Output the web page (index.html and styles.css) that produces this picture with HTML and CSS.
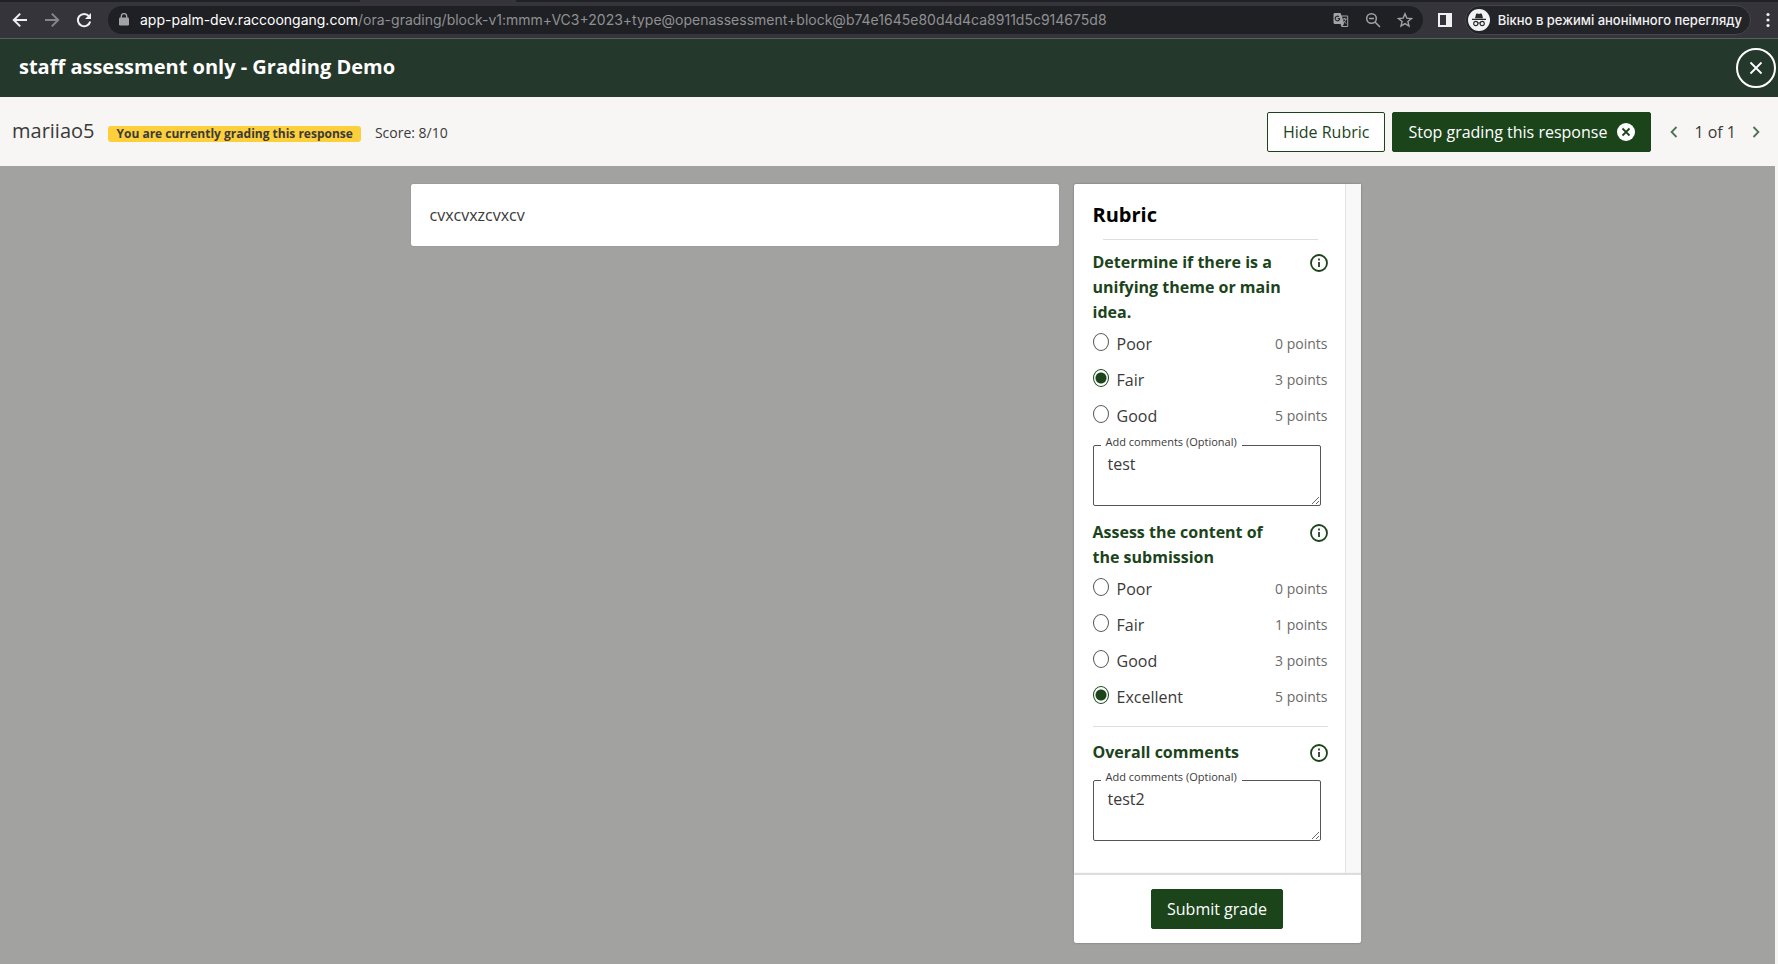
FILE: index.html
```html
<!DOCTYPE html>
<html lang="en">
<head>
<meta charset="utf-8">
<meta name="viewport" content="width=device-width, initial-scale=1">
<title>staff assessment only - Grading Demo</title>
<link rel="stylesheet" href="styles.css">
</head>
<body>
<svg width="0" height="0" class="sprite" aria-hidden="true">
  <symbol id="info" viewBox="0 0 18 18"><circle cx="9" cy="9" r="8" fill="none" stroke="currentColor" stroke-width="1.8"/><path d="M8.1 8h1.8v5H8.1zM8.1 4.6h1.8v1.8H8.1z" fill="currentColor"/></symbol>
</svg>
<div class="browser" role="toolbar" aria-label="Browser">
  <div class="tabs"><span class="tab"></span></div>
  <div class="toolbar">
    <button class="nav" aria-label="Back"><svg width="16" height="16" viewBox="0 0 16 16" fill="none" stroke="currentColor" stroke-width="2"><path d="M15 8H2.500M8.200 1.600 1.800 8l6.400 6.400"/></svg></button>
    <button class="nav dim" aria-label="Forward"><svg width="16" height="16" viewBox="0 0 16 16" fill="none" stroke="currentColor" stroke-width="2"><path d="M1 8h12.500M7.800 1.600 14.200 8l-6.400 6.400"/></svg></button>
    <button class="nav" aria-label="Reload"><svg width="16" height="16" viewBox="0 0 16 16" fill="none" stroke="currentColor" stroke-width="2"><path d="M13 4.200A6.200 6.200 0 1 0 14.200 9.500"/><path d="M15 1v6H9z" fill="currentColor" stroke="none"/></svg></button>
    <div class="address">
      <svg class="lock" width="10" height="14" viewBox="0 0 10 14"><rect y="4.500" width="10" height="8" rx="1.200" fill="currentColor"/><path d="M2.300 5V3.300a2.700 2.700 0 0 1 5.400 0V5" fill="none" stroke="currentColor" stroke-width="1.400"/></svg>
      <span class="url"><b>app-palm-dev.raccoongang.com</b>/ora-grading/block-v1:mmm+VC3+2023+type@openassessment+block@b74e1645e80d4d4ca8911d5c914675d8</span>
      <button class="tool" aria-label="Translate"><svg width="16" height="16" viewBox="0 0 16 16"><path d="M1.500 1h6l1 2.500H14A1.200 1.200 0 0 1 15.200 4.700v9A1.200 1.200 0 0 1 14 15H8.500l-1-3h-6A1.200 1.200 0 0 1 .5 10.800V2.200A1.200 1.200 0 0 1 1.500 1z" fill="currentColor"/><path d="M9 4.500h5.200V14H9.500l1.500-2z" fill="#1f2023"/><path d="M6.800 6.500H4.700M6.800 6.500A2.300 2.300 0 1 1 6 4.700" fill="none" stroke="#1f2023" stroke-width="1.100"/><path d="M9.200 7h4.500M11.500 6v1M12.900 7c-.3 1.800-1.500 3.200-2.900 4M10.200 8.500l3 3.200" fill="none" stroke="currentColor"/></svg></button>
      <button class="tool" aria-label="Zoom"><svg width="16" height="16" viewBox="0 0 16 16" fill="none" stroke="currentColor" stroke-width="1.500"><circle cx="6.500" cy="6.500" r="4.800"/><path d="M4 6.500h5M10 10l5 5"/></svg></button>
      <button class="tool" aria-label="Bookmark"><svg width="16" height="16" viewBox="0 0 16 16" fill="none" stroke="currentColor" stroke-width="1.400"><path d="m8 1.800 1.800 4.300 4.700.4-3.600 3 1.100 4.600-4-2.500-4 2.500 1.100-4.600-3.600-3 4.700-.4z"/></svg></button>
    </div>
    <button class="nav panel-toggle" aria-label="Side panel"><svg width="14" height="14" viewBox="0 0 14 14"><path d="M0 0h14v14H0zM2 2v10h6V2z" fill="currentColor" fill-rule="evenodd"/></svg></button>
    <button class="incognito"><svg width="22" height="22" viewBox="0 0 22 22"><circle cx="11" cy="11" r="11" fill="#f1f3f4"/><path d="M7 9.200 8 5.300c.2-.8.8-1 1.500-.7q1.500.7 3 0c.7-.3 1.300-.1 1.500.7l1 3.900zM4 9.800h14v1.200H4z" fill="#2a2b2f"/><circle cx="7.800" cy="14.500" r="2.100" fill="none" stroke="#2a2b2f" stroke-width="1.100"/><circle cx="14.200" cy="14.500" r="2.100" fill="none" stroke="#2a2b2f" stroke-width="1.100"/><path d="M9.800 14.200q1.200-.7 2.400 0" fill="none" stroke="#2a2b2f"/></svg><span>Вікно в режимі анонімного перегляду</span></button>
    <button class="nav more" aria-label="Menu"><svg width="4" height="16" viewBox="0 0 4 16" fill="currentColor"><circle cx="2" cy="2.500" r="1.600"/><circle cx="2" cy="8" r="1.600"/><circle cx="2" cy="13.500" r="1.600"/></svg></button>
  </div>
</div>

<header class="title-bar">
  <h1>staff assessment only - Grading Demo</h1>
  <button class="close" aria-label="Close"><svg width="14" height="14" viewBox="0 0 14 14" stroke="currentColor" stroke-width="1.800"><path d="m1.500 1.500 11 11M12.500 1.500l-11 11"/></svg></button>
</header>

<div class="action-bar">
  <div class="status">
    <span class="user">mariiao5</span>
    <span class="badge">You are currently grading this response</span>
    <span class="score">Score: 8/10</span>
  </div>
  <button class="btn outline">Hide Rubric</button>
  <button class="btn solid">Stop grading this response<svg width="18" height="18" viewBox="0 0 18 18"><circle cx="9" cy="9" r="9" fill="#fff"/><path d="m5.500 5.500 7 7M12.500 5.500l-7 7" stroke="#1b441b" stroke-width="1.800"/></svg></button>
  <nav class="pager" aria-label="Responses">
    <button aria-label="Previous"><svg width="8" height="12" viewBox="0 0 8 12" fill="none" stroke="currentColor" stroke-width="1.800"><path d="M6.500 1 1.600 6l4.900 5"/></svg></button>
    <span>1 of 1</span>
    <button aria-label="Next"><svg width="8" height="12" viewBox="0 0 8 12" fill="none" stroke="currentColor" stroke-width="1.800"><path d="m1.500 1 4.900 5-4.900 5"/></svg></button>
  </nav>
</div>

<main class="content">
  <section class="response"><p>cvxcvxzcvxcv</p></section>
  <aside class="rubric">
    <div class="rubric-scroll">
      <h2>Rubric</h2>
      <hr class="short">
      <section class="criterion" role="radiogroup" aria-labelledby="c1">
        <div class="criterion-head"><h3 id="c1">Determine if there is a unifying theme or main idea.</h3><button class="info" aria-label="Details"><svg width="18" height="18"><use href="#info"/></svg></button></div>
        <label class="option"><input type="radio" name="theme"><span>Poor</span><small>0 points</small></label>
        <label class="option"><input type="radio" name="theme" checked><span>Fair</span><small>3 points</small></label>
        <label class="option"><input type="radio" name="theme"><span>Good</span><small>5 points</small></label>
        <div class="comment"><label for="t1">Add comments (Optional)</label><textarea id="t1">test</textarea></div>
      </section>
      <section class="criterion" role="radiogroup" aria-labelledby="c2">
        <div class="criterion-head"><h3 id="c2">Assess the content of the submission</h3><button class="info" aria-label="Details"><svg width="18" height="18"><use href="#info"/></svg></button></div>
        <label class="option"><input type="radio" name="content"><span>Poor</span><small>0 points</small></label>
        <label class="option"><input type="radio" name="content"><span>Fair</span><small>1 points</small></label>
        <label class="option"><input type="radio" name="content"><span>Good</span><small>3 points</small></label>
        <label class="option"><input type="radio" name="content" checked><span>Excellent</span><small>5 points</small></label>
      </section>
      <hr>
      <section class="overall">
        <div class="criterion-head"><h3>Overall comments</h3><button class="info" aria-label="Details"><svg width="18" height="18"><use href="#info"/></svg></button></div>
        <div class="comment"><label for="t2">Add comments (Optional)</label><textarea id="t2">test2</textarea></div>
      </section>
    </div>
    <footer class="rubric-footer"><button class="btn solid">Submit grade</button></footer>
  </aside>
</main>
</body>
</html>
```
FILE: styles.css
```css
* { box-sizing: border-box; }
body {
  margin: 0;
  min-height: 100vh;
  display: flex;
  flex-direction: column;
  font: 16px/26px "Open Sans", sans-serif;
  color: #3a3a3a;
  background: #f7f6f4;
}
h1, h2, h3, p { margin: 0; }
button { margin: 0; padding: 0; border: 0; background: none; color: inherit; font: inherit; }
svg { display: block; flex: none; }
.sprite { position: absolute; }

/* Browser chrome */
.browser { background: #35343a; border-bottom: 1px solid #57605a; color: #f1f1f3; }
.tabs { height: 2px; background: #202124; display: flex; }
.tab { width: 156px; margin-left: 360px; background: #35343a; }
.toolbar { height: 36px; display: flex; align-items: center; padding: 0 2px 0 12px; }
.nav { width: 16px; height: 16px; margin-right: 16px; display: grid; place-items: center; }
.dim { color: #85858a; }
.address {
  flex: 1;
  min-width: 0;
  height: 28px;
  padding: 0 10px 0 11px;
  display: flex;
  align-items: center;
  border-radius: 14px;
  background: #1f2023;
  color: #a2a3a6;
}
.lock { margin-right: 11px; }
.tool { margin-left: 16px; }
.url { flex: 1; min-width: 0; overflow: hidden; white-space: nowrap; font: 14px/20px Inter, sans-serif; color: #8f9093; }
.url b { font-weight: 400; color: #fff; }
.panel-toggle { margin: 0 12px 0 14px; }
.incognito {
  height: 30px;
  padding: 0 8px 0 2px;
  display: flex;
  align-items: center;
  gap: 8px;
  border: 1px solid #45454a;
  border-radius: 15px;
  background: #232428;
  font: 500 13px/20px Inter, sans-serif;
  white-space: nowrap;
}
.more { margin: 0 0 0 9px; }

/* Page header */
.title-bar {
  min-height: 58px;
  padding: 0 2px 0 19px;
  display: flex;
  align-items: center;
  justify-content: space-between;
  background: #25382c;
  color: #fff;
}
.title-bar h1 { padding-bottom: 2px; font-size: 20px; line-height: 28px; }
.close { width: 40px; height: 40px; display: grid; place-items: center; border: 2px solid #fff; border-radius: 50%; }

.action-bar { min-height: 69px; padding: 0 18px 0 12px; display: flex; align-items: center; white-space: nowrap; }
.status { flex: 1; display: flex; align-items: baseline; gap: 14px; }
.user { font-size: 20px; }
.badge { padding: 0 8px; border-radius: 3px; background: #fdd03b; font-size: 12px; line-height: 16px; font-weight: 700; }
.score { font-size: 14px; }
.btn { min-height: 40px; padding: 0 15px; border: 1px solid #1b441b; border-radius: 2px; display: flex; align-items: center; gap: 10px; }
.outline { color: #1b441b; background: #fff; margin-right: 7px; }
.solid { color: #fff; background: #1b441b; }
.pager { display: flex; align-items: center; gap: 16px; margin-left: 19px; }
.pager button { color: #4b7350; }

/* Workspace */
.content {
  flex: 1;
  display: flex;
  justify-content: center;
  align-items: flex-start;
  gap: 15px;
  padding: 18px 4px 21px 0;
  margin-right: 3px;
  background: #a2a2a1;
}
.response { width: 648px; padding: 18px 19px; background: #fff; border-radius: 2px; box-shadow: 0 0 1px #666; }
.rubric { width: 287px; background: #fff; border-radius: 2px; box-shadow: 0 0 2px #666; }
.rubric-scroll {
  padding: 17px 18px 19px 19px;
  border-right: 15px solid #f8f8f8;
  box-shadow: inset -1px 0 #e4e4e4;
}
h2 { font-size: 20px; line-height: 28px; color: #000; }
hr { height: 1px; border: 0; margin: 11px 0 13px; background: #dedede; }
.short { margin: 10px 10px 10px; }
.criterion-head { display: flex; align-items: flex-start; justify-content: space-between; margin-bottom: 1px; }
h3 { width: 200px; font-size: 16px; line-height: 25px; color: #1b441b; }
.info { margin-top: 4px; color: #1b441b; }
.option { height: 36px; display: flex; align-items: center; }
.option input {
  appearance: none;
  width: 16px;
  height: 18px;
  margin: 0 8px 4px 0;
  border: 1px solid #555;
  border-radius: 50%;
}
.option input:checked { border-color: #1b441b; background: radial-gradient(circle, #1b441b 5px, transparent 6px); }
.option small { margin-left: auto; font-size: 14px; color: #6b6b6b; }
.comment { position: relative; margin: 11px 7px 14px 0; }
.overall .comment { margin-top: 15px; }
.comment label { position: absolute; left: 8px; top: -12px; padding: 0 5px; background: #fff; font-size: 11px; line-height: 18px; }
textarea {
  display: block;
  width: 100%;
  height: 61px;
  padding: 5px 14px;
  border: 1px solid #555;
  border-radius: 2px;
  font: inherit;
  color: inherit;
  background: #fff;
}
.rubric-footer { display: flex; justify-content: center; padding: 14px; border-top: 1px solid #ddd; box-shadow: 0 -1px 1px #ddd; }
```
